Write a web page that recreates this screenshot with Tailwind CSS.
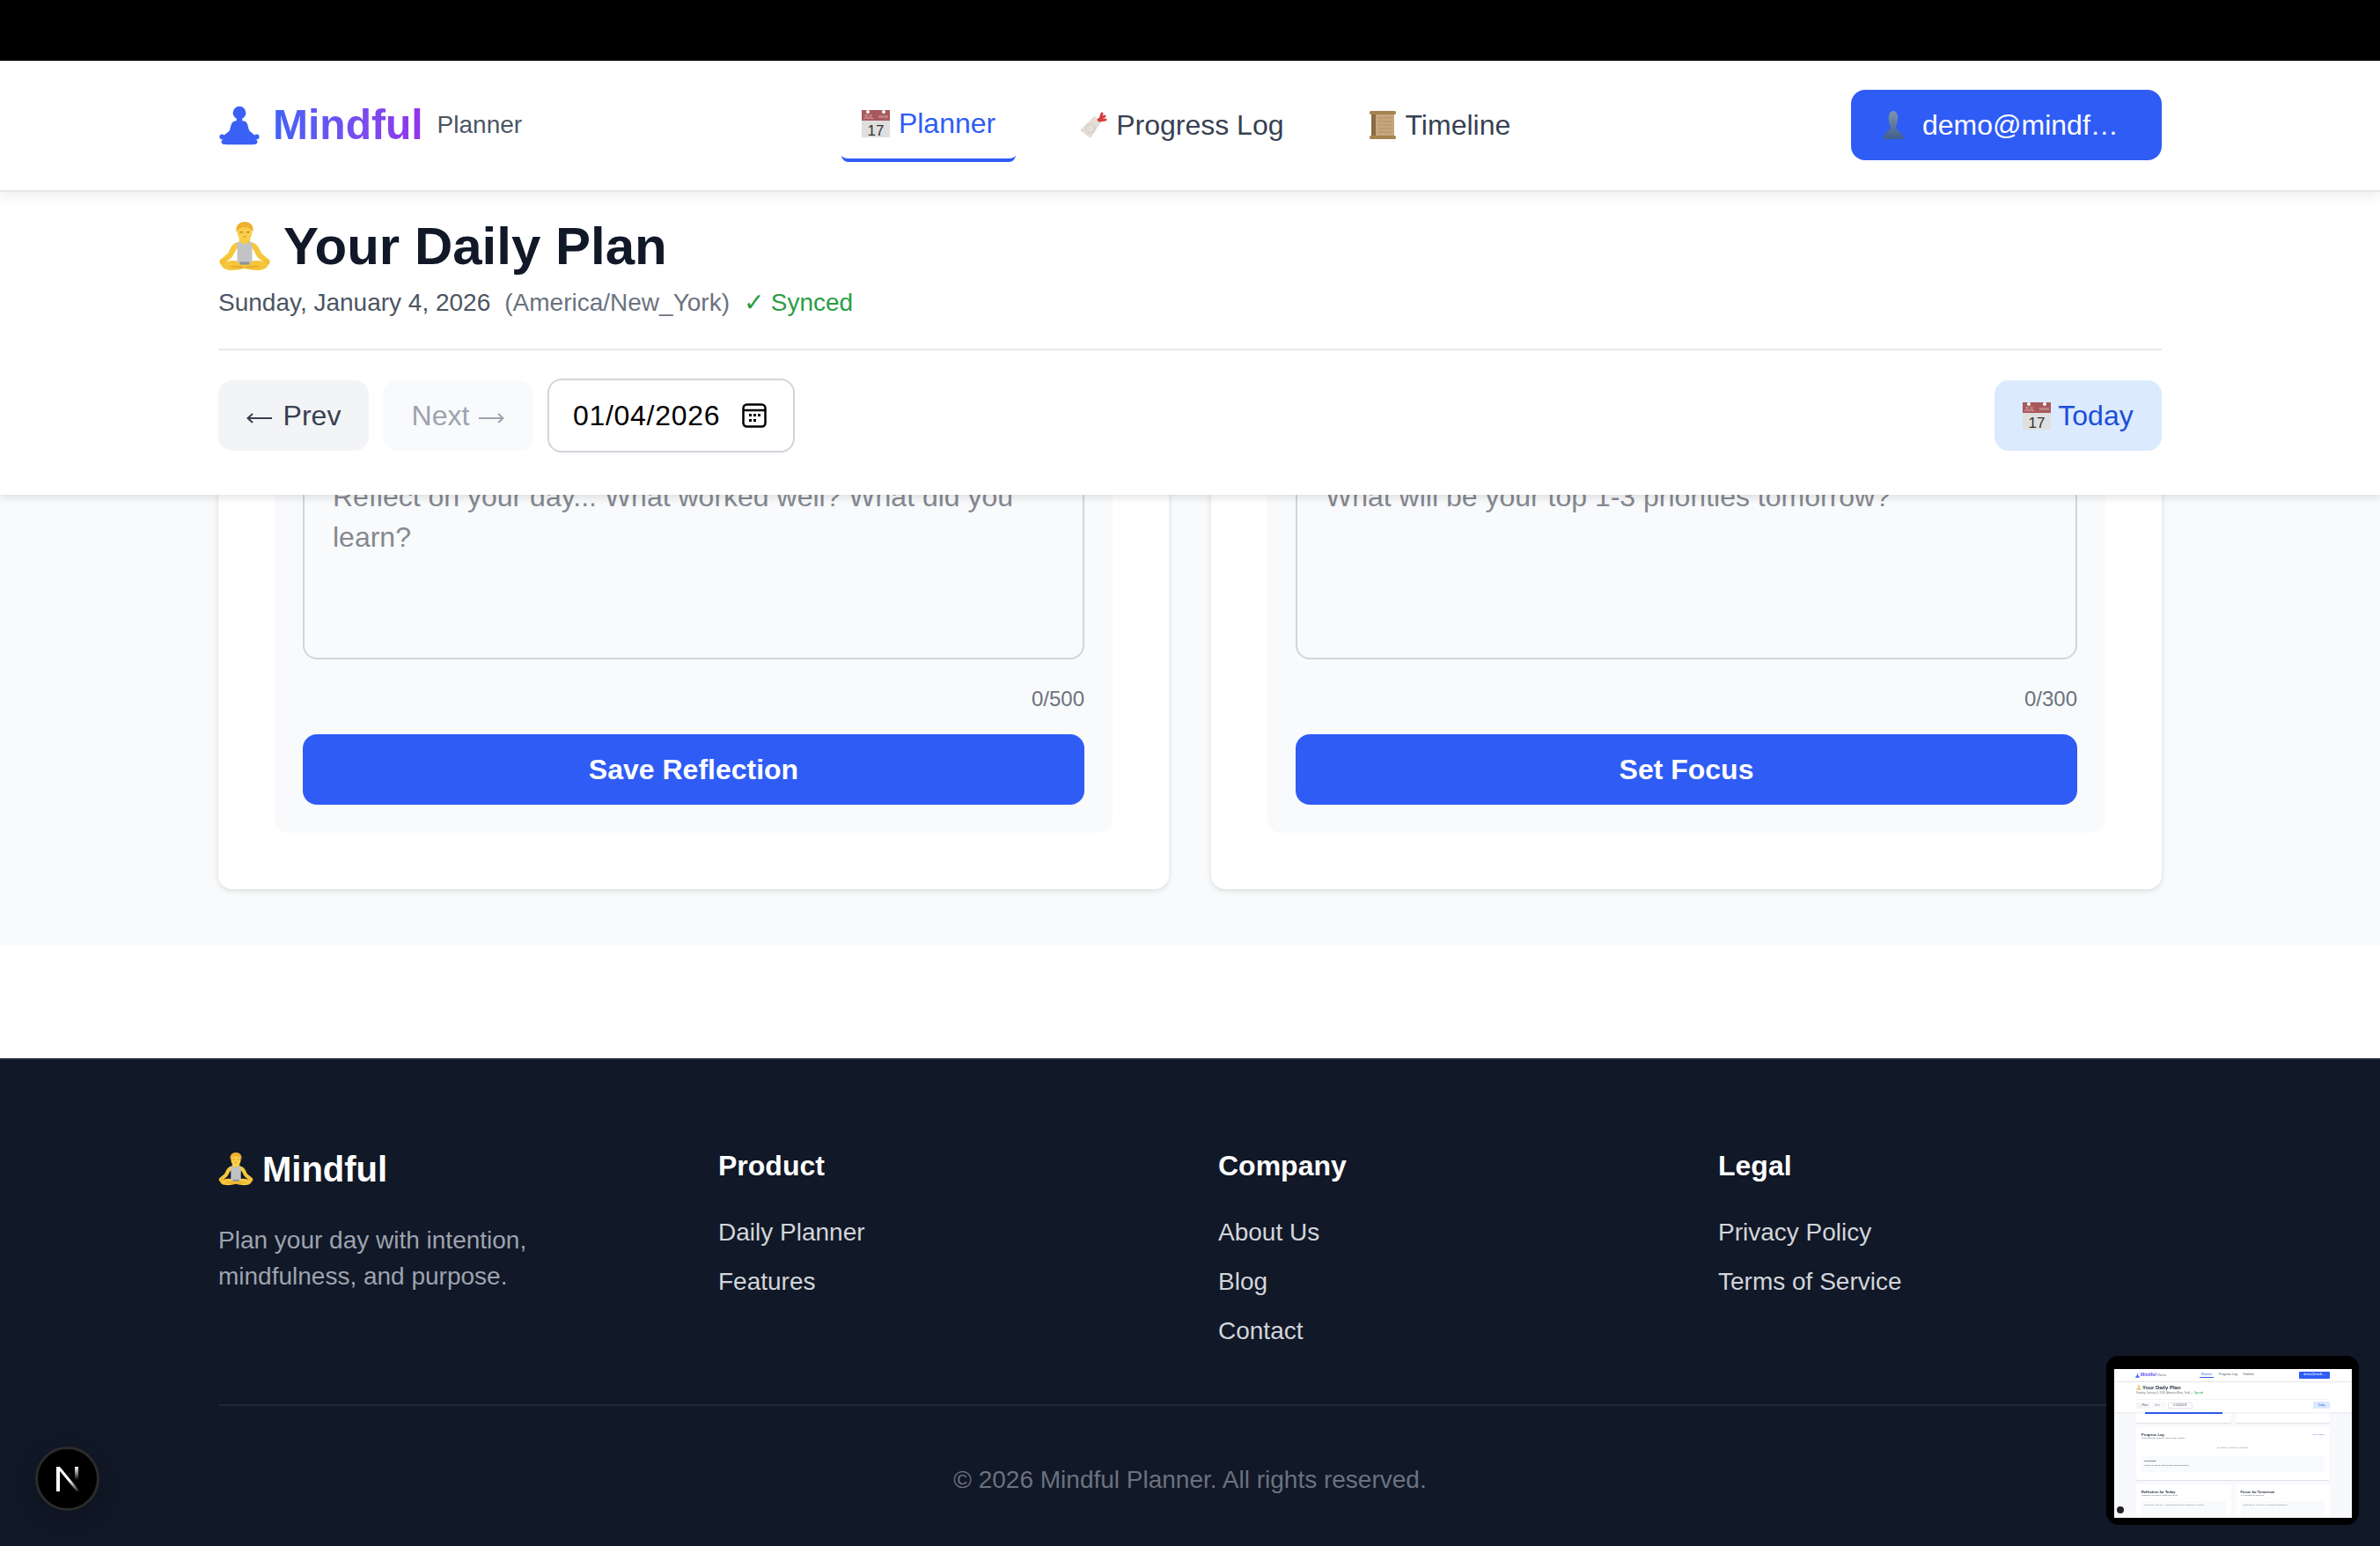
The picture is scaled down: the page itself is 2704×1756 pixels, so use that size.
<!DOCTYPE html>
<html lang="en">
<head>
<meta charset="utf-8">
<title>Mindful Planner</title>
<script src="https://cdn.jsdelivr.net/npm/@tailwindcss/browser@4"></script>
</head>
<body class="bg-white font-['Liberation_Sans',Arial,sans-serif] text-[32px] text-[#111827]">
<svg width="0" height="0" class="absolute">
  <defs>
    <symbol id="sil" viewBox="0 0 56 53">
      <ellipse cx="28" cy="9" rx="9" ry="9"/>
      <path d="M24 16H32V21H24Z"/>
      <path d="M20 21 C24 19.500 32 19.500 36 21 C40 22.500 40 31 42 34 L49 40 C52 37 56 39 55.500 43 C55 46 52 46.500 50 45.500 C55 48 54 53 46 53 L10 53 C2 53 1 48 6 45.500 C4 46.500 1 46 0.500 43 C0 39 4 37 7 40 L14 34 C16 31 16 22.500 20 21Z"/>
    </symbol>
    <symbol id="yogi" viewBox="0 0 56 53">
      <g fill="none" stroke="#f6c73c" stroke-width="6" stroke-linecap="round"><path d="M20 25 C15 27 15 32 12 36 L6 41"/><path d="M36 25 C41 27 41 32 44 36 L50 41"/></g>
      <circle cx="4.500" cy="43" r="3.500" fill="#f3bf33"/><circle cx="51.500" cy="43" r="3.500" fill="#f3bf33"/>
      <path fill="#f7cb42" d="M22 15 H34 V24 H22Z"/>
      <path fill="#f6c73c" d="M3 47 C7 41 18 40 28 44 C38 40 49 41 53 47 C50 53 38 53 28 50 C18 53 6 53 3 47Z"/>
      <path fill="#c1c3c4" d="M20 22 L23.500 21 C25 25 31 25 32.500 21 L36 22 L36 44 L20 44Z"/>
      <path fill="#8f9193" d="M23 43 H33 V46 H23Z"/>
      <path fill="#e6a52c" d="M10 48 C18 46 24 47 28 49 C32 47 38 46 46 48 C38 50 33 50 28 50 C23 50 18 50 10 48Z" opacity=".7"/>
      <ellipse cx="28" cy="11" rx="8" ry="9.500" fill="#f8ce48"/>
      <path fill="#eeb02d" d="M19 11 C18 4 22 0 28 0 C34 0 38 4 37 11 C35 7 32 6 27 6 C23 6 21 8 19 11Z"/>
      <path stroke="#a97a1e" stroke-width="1" d="M23 11H26M30 11H33M27 16H29"/>
    </symbol>
    <symbol id="cal" viewBox="0 0 32 32">
      <rect x="0" y="1" width="32" height="31" fill="#dfdfdf"/>
      <rect x="0" y="1" width="32" height="12" fill="#a8595c"/>
      <circle cx="7" cy="3" r="2" fill="#fff"/>
      <circle cx="25" cy="3" r="2" fill="#fff"/>
      <text x="2" y="11" font-size="6.500" font-family="Liberation Sans" fill="#e6bcbc">JUL</text>
      <rect x="19" y="7" width="11" height="3" fill="#bb8080"/>
      <text x="16" y="29.500" text-anchor="middle" font-size="17" font-family="Liberation Sans" fill="#333">17</text>
    </symbol>
    <symbol id="tag" viewBox="0 0 32 32">
      <path fill="#e3dfd6" d="M17 6 L26 11 L13 31 L1 22Z"/>
      <circle cx="13" cy="20" r="5" fill="none" stroke="#c9c4b8" stroke-width="1.500" stroke-dasharray="1 1"/>
      <path fill="none" stroke="#d9403c" stroke-width="3" stroke-linecap="round" d="M22 10 L29 6 M24 9 L26 3 M23 11 L30 10"/>
    </symbol>
    <symbol id="scroll" viewBox="0 0 32 32">
      <rect x="3" y="2" width="26" height="28" fill="#c7a67c"/>
      <rect x="3" y="2" width="5" height="28" fill="#8c6a42"/>
      <rect x="1" y="0" width="30" height="4" rx="1.500" fill="#a5834f"/>
      <rect x="1" y="28" width="30" height="4" rx="1.500" fill="#a5834f"/>
      <path stroke="#b1906a" stroke-width="1" d="M11 8H26M11 12H26M11 16H26M11 20H26M11 24H26"/>
    </symbol>
    <linearGradient id="bust" x1="0" y1="0" x2="0" y2="1"><stop offset="0" stop-color="#7f94ae"/><stop offset="1" stop-color="#3f5f8c"/></linearGradient>
    <symbol id="user" viewBox="0 0 32 32">
      <path fill="url(#bust)" d="M16 0 C20 0 22 5 21 11 C20.500 15 19 17 19 19 C19 22 27 24 28 32 L4 32 C5 24 13 22 13 19 C13 17 11.500 15 11 11 C10 5 12 0 16 0Z"/>
    </symbol>
    <linearGradient id="nfade" x1="0" y1="0" x2="1" y2="1"><stop offset="0.55" stop-color="#fff"/><stop offset="1" stop-color="#fff" stop-opacity="0"/></linearGradient>
    <linearGradient id="nfade2" x1="0" y1="0" x2="0" y2="1"><stop offset="0" stop-color="#fff"/><stop offset="0.8" stop-color="#fff" stop-opacity="0"/></linearGradient>
  </defs>
</svg>

<div class="h-[69px] bg-black"></div>

<header class="relative z-20 h-[149px] border-b-2 border-[#e5e7eb] bg-white shadow-[0_4px_16px_rgba(0,0,0,0.08)]">
  <div class="mx-auto flex h-full w-[2208px] items-center justify-between pb-[1px]">
    <div class="flex items-center gap-[16px]">
      <div class="flex items-center gap-[15px]">
        <svg class="ml-[1px] h-[45px] w-[46px] fill-[#3b60f6]"><use href="#sil"/></svg>
        <span class="bg-gradient-to-r from-[#3e63f6] to-[#9333ea] bg-clip-text text-[48px] leading-[60px] font-bold text-transparent">Mindful</span>
      </div>
      <span class="text-[28px] text-[#4b5563]">Planner</span>
    </div>
    <nav class="flex items-center gap-[48px]">
      <a class="flex items-center gap-[10px] rounded-[8px] border-b-4 border-[#2f5cf5] px-[23px] py-[16px] leading-[48px] text-[#2f5cf5]"><svg class="h-[32px] w-[32px]"><use href="#cal"/></svg>Planner</a>
      <a class="flex items-center gap-[10px] px-[24px] py-[16px] leading-[48px] text-[#374151]"><svg class="h-[32px] w-[32px]"><use href="#tag"/></svg>Progress Log</a>
      <a class="flex items-center gap-[10px] px-[24px] py-[16px] leading-[48px] text-[#374151]"><svg class="h-[32px] w-[32px]"><use href="#scroll"/></svg>Timeline</a>
    </nav>
    <button class="flex h-[80px] w-[353px] items-center gap-[17px] rounded-[16px] bg-[#2f5cf5] px-[32px] text-white"><svg class="h-[32px] w-[32px]"><use href="#user"/></svg>demo@mindf…</button>
  </div>
</header>

<section class="relative z-10 bg-white shadow-[0_4px_8px_rgba(0,0,0,0.1)]">
  <div class="mx-auto w-[2208px] pt-[26px] pb-[48px]">
    <h1 class="flex items-center gap-[14px] text-[60px] leading-[72px] font-bold text-[#111827]"><svg class="h-[56px] w-[60px]"><use href="#yogi"/></svg>Your Daily Plan</h1>
    <p class="mt-[8px] flex h-[40px] items-center gap-[16px] text-[28px]">
      <span class="text-[#4b5563]">Sunday, January 4, 2026</span>
      <span class="text-[#6b7280]">(America/New_York)</span>
      <span class="text-[#2a9d45]">✓ Synced</span>
    </p>
    <div class="mt-[32px] flex items-center justify-between border-t-2 border-[#e5e7eb] pt-[32px]">
      <div class="flex items-center gap-[16px]">
        <button class="flex h-[80px] w-[171px] items-center justify-center gap-[13px] rounded-[16px] bg-[#f3f4f6] text-[#374151]"><svg class="mt-[6px] h-[14px] w-[29px]" viewBox="0 0 29 14" fill="none" stroke="currentColor" stroke-width="2"><path d="M1 7H29M7 2L1.500 7L7 12"/></svg>Prev</button>
        <button class="flex h-[80px] w-[171px] items-center justify-center gap-[11px] rounded-[16px] bg-[#f9fafb] text-[#9ca3af]">Next<svg class="mt-[6px] h-[14px] w-[29px]" viewBox="0 0 29 14" fill="none" stroke="currentColor" stroke-width="2"><path d="M0 7H28M22 2L27.500 7L22 12"/></svg></button>
        <div class="flex h-[84px] w-[281px] items-center justify-between rounded-[16px] border-2 border-[#d1d5db] bg-white pr-[30px] pl-[27px] tracking-[0.7px] text-black">01/04/2026
          <svg class="h-[28px] w-[28px]" viewBox="0 0 28 28" fill="none" stroke="#000" stroke-width="2.500"><rect x="1.500" y="1.500" width="25" height="25" rx="4"/><path d="M1.500 8H26.500"/><g fill="#000" stroke="none"><rect x="8" y="12" width="3" height="3"/><rect x="13" y="12" width="3" height="3"/><rect x="18" y="12" width="3" height="3"/><rect x="8" y="18" width="3" height="3"/><rect x="13" y="18" width="3" height="3"/></g></svg>
        </div>
      </div>
      <button class="flex h-[80px] w-[190px] items-center justify-center gap-[8px] rounded-[16px] bg-[#dbeafe] text-[#1d4ed8]"><svg class="h-[32px] w-[32px]"><use href="#cal"/></svg>Today</button>
    </div>
  </div>
</section>

<main class="flex h-[512px] flex-col justify-end overflow-hidden bg-[#f9fafb] pb-[64px]">
  <div class="mx-auto grid w-[2208px] grid-cols-2 gap-[48px]">
    <div class="rounded-[16px] bg-white p-[64px] shadow-[0_2px_6px_rgba(0,0,0,0.12)]">
      <div class="rounded-[16px] bg-[#f9fafb] p-[32px]">
        <textarea class="block h-[234px] w-full resize-none rounded-[16px] border-2 border-[#d1d5db] bg-[#f9fafb] px-[32px] py-[24px] text-[32px] leading-[46px] placeholder:text-[#858891]" placeholder="Reflect on your day... What worked well? What did you learn?"></textarea>
        <p class="mt-[29px] text-right text-[24px] leading-[32px] text-[#6b7280]">0/500</p>
        <button class="mt-[24px] block h-[80px] w-full rounded-[16px] bg-[#2f5cf5] font-bold text-white">Save Reflection</button>
      </div>
    </div>
    <div class="rounded-[16px] bg-white p-[64px] shadow-[0_2px_6px_rgba(0,0,0,0.12)]">
      <div class="rounded-[16px] bg-[#f9fafb] p-[32px]">
        <textarea class="block h-[234px] w-full resize-none rounded-[16px] border-2 border-[#d1d5db] bg-[#f9fafb] px-[32px] py-[24px] text-[32px] leading-[46px] placeholder:text-[#858891]" placeholder="What will be your top 1-3 priorities tomorrow?"></textarea>
        <p class="mt-[29px] text-right text-[24px] leading-[32px] text-[#6b7280]">0/300</p>
        <button class="mt-[24px] block h-[80px] w-full rounded-[16px] bg-[#2f5cf5] font-bold text-white">Set Focus</button>
      </div>
    </div>
  </div>
</main>

<div class="h-[128px] bg-white"></div>

<footer class="h-[556px] border-t-2 border-[#1f2937] bg-[#111827]">
  <div class="mx-auto w-[2208px] pt-[96px]">
    <div class="grid h-[297px] grid-cols-4 gap-[64px] border-b-2 border-[#1f2937]">
      <div>
        <div class="flex items-center gap-[10px] text-[40px] leading-[56px] font-bold text-white"><svg class="h-[38px] w-[40px]"><use href="#yogi"/></svg>Mindful</div>
        <p class="mt-[32px] w-[400px] text-[28px] leading-[41px] text-[#9ca3af]">Plan your day with intention, mindfulness, and purpose.</p>
      </div>
      <div>
        <h3 class="text-[32px] leading-[48px] font-bold text-white">Product</h3>
        <ul class="mt-[32px] flex flex-col gap-[16px] text-[28px] leading-[40px] text-[#d1d5db]"><li>Daily Planner</li><li>Features</li></ul>
      </div>
      <div>
        <h3 class="text-[32px] leading-[48px] font-bold text-white">Company</h3>
        <ul class="mt-[32px] flex flex-col gap-[16px] text-[28px] leading-[40px] text-[#d1d5db]"><li>About Us</li><li>Blog</li><li>Contact</li></ul>
      </div>
      <div>
        <h3 class="text-[32px] leading-[48px] font-bold text-white">Legal</h3>
        <ul class="mt-[32px] flex flex-col gap-[16px] text-[28px] leading-[40px] text-[#d1d5db]"><li>Privacy Policy</li><li>Terms of Service</li></ul>
      </div>
    </div>
    <p class="mt-[64px] text-center text-[28px] leading-[40px] text-[#6b7280]">© 2026 Mindful Planner. All rights reserved.</p>
  </div>
</footer>

<!-- dev indicator -->
<div class="absolute top-[1643px] left-[40px] flex h-[73px] w-[73px] items-center justify-center rounded-full border-[3px] border-[#2b2b2b] bg-black shadow-[0_8px_24px_rgba(0,0,0,0.25)]">
  <svg class="h-[30px] w-[30px]" viewBox="0 0 30 30"><path d="M2 1H6V29H2Z" fill="#fff"/><path d="M2 1H6L29 29H25Z" fill="url(#nfade)"/><path d="M23 1H27V20H23Z" fill="url(#nfade2)"/></svg>
</div>

<!-- page preview -->
<div class="absolute top-[1540px] left-[2393px] h-[192px] w-[287px] rounded-[14px] bg-black px-[9px] py-[8px]">
  <div class="relative h-[176px] w-[270px] overflow-hidden bg-[#f8f9fc] blur-[0.5px]">
    <div class="h-[7px] bg-black"></div>
    <div class="relative z-10 flex h-[15px] items-center border-b border-[#e5e7eb] bg-white pr-[25px] pl-[24px]">
      <svg class="h-[5px] w-[5px] fill-[#3b60f6]"><use href="#sil"/></svg>
      <span class="ml-[1px] w-[67px] text-[5px] font-bold text-[#5b4bf0]">Mindful <span class="text-[3px] font-normal text-[#6b7280]">Planner</span></span>
      <span class="flex items-center gap-[6px] text-[3.500px] text-[#4b5563]"><span class="border-b border-[#2f5cf5] px-[2px] text-[#2f5cf5]">Planner</span><span>Progress Log</span><span>Timeline</span></span>
      <span class="ml-auto flex h-[8px] w-[35px] items-center justify-center rounded-[1px] bg-[#2f5cf5] text-[3.500px] text-white">demo@mindf…</span>
    </div>
    <div class="relative z-10 h-[34px] bg-white px-[25px] pt-[2px] shadow-[0_1px_2px_rgba(0,0,0,0.08)]">
      <div class="flex items-center gap-[1px] text-[6px] leading-[8px] font-bold text-[#1f2937]"><svg class="h-[6px] w-[6px]"><use href="#yogi"/></svg>Your Daily Plan</div>
      <div class="text-[3px] leading-[4px] text-[#6b7280]">Sunday, January 4, 2026 (America/New_York) <span class="text-[#16a34a]">✓ Synced</span></div>
      <div class="mt-[5px] flex items-center justify-between border-t border-[#f3f4f6] pt-[2px] text-[3px] text-[#4b5563]">
        <span class="flex gap-[2px]"><span class="flex h-[7px] w-[16px] items-center justify-center rounded-[1px] bg-[#f3f4f6]">← Prev</span><span class="flex h-[7px] w-[16px] items-center justify-center rounded-[1px] bg-[#f9fafb] text-[#9ca3af]">Next →</span><span class="flex h-[7px] w-[28px] items-center justify-center rounded-[1px] border border-[#e5e7eb]">01/04/2026</span></span>
        <span class="flex h-[8px] w-[19px] items-center justify-center rounded-[1px] bg-[#dbeafe] text-[#2f5cf5]">Today</span>
      </div>
    </div>
    <div class="mx-[25px] grid grid-cols-2 gap-[5px]">
      <div class="h-[12px] rounded-b-[2px] bg-white px-[10px] shadow-[0_1px_1px_rgba(0,0,0,0.1)]"><div class="h-[2px] bg-[#2f5cf5]"></div></div>
      <div class="h-[12px] rounded-b-[2px] bg-white shadow-[0_1px_1px_rgba(0,0,0,0.1)]"></div>
    </div>
    <div class="mx-[25px] mt-[5px] h-[60px] rounded-[2px] bg-white px-[6px] pt-[6px] shadow-[0_1px_1px_rgba(0,0,0,0.1)]">
      <div class="flex items-center justify-between text-[4px] leading-[5px] font-bold text-[#1f2937]"><span>Progress Log</span><span class="text-[2.500px] font-normal text-[#2f5cf5]">+ New Activity</span></div>
      <div class="text-[2.500px] leading-[4px] text-[#4b5563]">Track projects, hobbies, and events (0 today)</div>
      <div class="mt-[7px] text-center text-[2.500px] leading-[4px] text-[#6b7280]">No activity updates yet for today.</div>
      <div class="mt-[7px] h-[18px] rounded-[1px] bg-[#f9fafb] px-[3px] pt-[3px] text-[2.500px] leading-[5px] text-[#4b5563]"><div class="font-bold text-[#111827]">Log Update</div>Create an activity first to start logging updates</div>
    </div>
    <div class="mx-[25px] mt-[5px] grid grid-cols-2 gap-[5px]">
      <div class="h-[60px] rounded-[2px] bg-white p-[6px]"><div class="text-[4px] leading-[5px] font-bold text-[#1f2937]">Reflection for Today</div><div class="text-[2.500px] leading-[4px] text-[#4b5563]">What did you learn? What went well?</div><div class="mt-[4px] h-[30px] rounded-[1px] bg-[#f9fafb] p-[3px] text-[2.500px] leading-[4px] text-[#6b7280]">Reflect on your day... What worked well? What did you learn?</div></div>
      <div class="h-[60px] rounded-[2px] bg-white p-[6px]"><div class="text-[4px] leading-[5px] font-bold text-[#1f2937]">Focus for Tomorrow</div><div class="text-[2.500px] leading-[4px] text-[#4b5563]">1-3 priorities to focus on</div><div class="mt-[4px] h-[30px] rounded-[1px] bg-[#f9fafb] p-[3px] text-[2.500px] leading-[4px] text-[#6b7280]">What will be your top 1-3 priorities tomorrow?</div></div>
    </div>
    <div class="absolute top-[163px] left-[3px] z-20 h-[8px] w-[8px] rounded-full bg-[#222]"></div>
  </div>
</div>
</body>
</html>
